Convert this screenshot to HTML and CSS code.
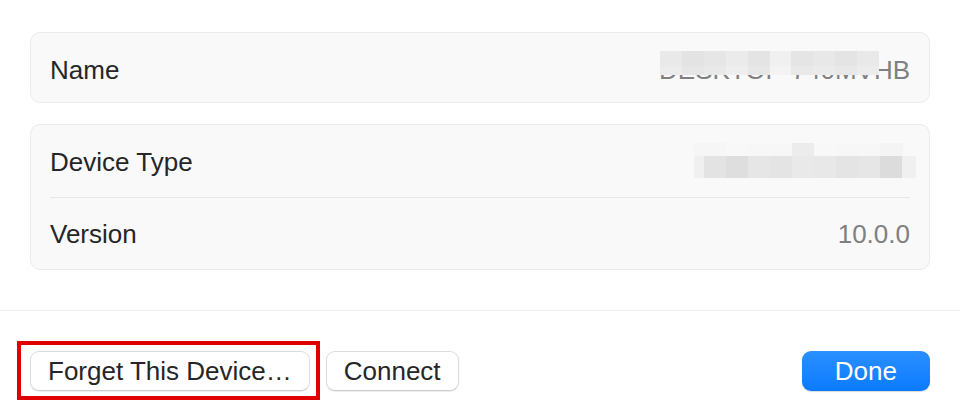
FILE: index.html
```html
<!DOCTYPE html>
<html lang="en">
<head>
<meta charset="utf-8">
<title>Device Info</title>
<link rel="stylesheet" href="styles.css">
</head>
<body>
<div class="sheet">
  <div class="content">
    <div class="card">
      <div class="row row-single">
        <span class="label">Name</span>
        <span class="value masked">DESKTOP-740MVHB<span class="mosaic mosaic-name"></span></span>
      </div>
    </div>
    <div class="card">
      <div class="row row-tall">
        <span class="label">Device Type</span>
        <span class="mosaic mosaic-type"></span>
      </div>
      <div class="sep"></div>
      <div class="row row-tall">
        <span class="label">Version</span>
        <span class="value">10.0.0</span>
      </div>
    </div>
  </div>
  <div class="footer">
    <div class="highlight"><button class="btn">Forget This Device…</button></div>
    <button class="btn">Connect</button>
    <button class="btn btn-primary">Done</button>
  </div>
</div>
</body>
</html>
```

FILE: styles.css
```css
html, body {
  margin: 0;
  padding: 0;
  background: #ffffff;
}

body {
  font-family: "Liberation Sans", Arial, sans-serif;
  font-size: 26px;
  color: #262626;
  width: 960px;
  height: 420px;
  overflow: hidden;
}

.content {
  display: flex;
  flex-direction: column;
  gap: 21px;
  padding: 32px 30px 0 30px;
}

.card {
  background: #f9f9f9;
  border: 1px solid #ebebeb;
  border-radius: 10px;
  padding: 0 19px;
}

.row {
  display: flex;
  justify-content: space-between;
  align-items: center;
  box-sizing: border-box;
  line-height: 30px;
}

.row-single {
  height: 69px;
  padding-top: 4px;
}

.row-tall {
  height: 71.5px;
  padding-top: 2px;
}

.sep {
  height: 1px;
  background: #e7e7e7;
}

.label {
  color: #262626;
}

.value {
  color: #808080;
  position: relative;
}

.mosaic {
  display: block;
}

.mosaic-name {
  position: absolute;
  right: 31px;
  top: -4px;
  width: 219px;
  height: 24px;
  background:
    linear-gradient(to right,
      #e9e9e9 0 10%, #e3e3e3 10% 20%, #e6e6e6 20% 30%, #ebebeb 30% 40%,
      #e4e4e4 40% 50%, #f0f0f0 50% 60%, #e5e5e5 60% 70%, #e8e8e8 70% 80%,
      #e4e4e4 80% 90%, #e9e9e9 90% 100%) top / 100% 15px no-repeat,
    linear-gradient(to right,
      #ececec 0 10%, #e6e6e6 10% 20%, #e9e9e9 20% 30%, #eeeeee 30% 40%,
      #e7e7e7 40% 50%, #f3f3f3 50% 60%, #e9e9e9 60% 70%, #ebebeb 70% 80%,
      #e8e8e8 80% 90%, #ececec 90% 100%) bottom / 100% 9px no-repeat;
}

.mosaic-type {
  width: 222px;
  height: 35px;
  margin-right: -6px;
  margin-bottom: 2.5px;
  background:
    linear-gradient(to right,
      #f6f6f6 0 14%, #f8f8f8 14% 24%, #f7f7f7 24% 44%, #ececec 44% 54%,
      #f8f8f8 54% 64%, #f7f7f7 64% 84%, #f4f4f4 84% 94%, #f9f9f9 94% 100%) top / 100% 13px no-repeat,
    linear-gradient(to right,
      #f0f0f0 0 4.5%, #e3e3e3 4.5% 14.4%, #dedede 14.4% 24.3%, #e6e6e6 24.3% 34.2%,
      #e4e4e4 34.2% 44.1%, #e9e9e9 44.1% 54%, #e8e8e8 54% 63.9%, #e4e4e4 63.9% 73.8%,
      #e6e6e6 73.8% 83.7%, #dcdcdc 83.7% 93.6%, #f0f0f0 93.6% 100%) bottom / 100% 22px no-repeat;
}

.footer {
  display: flex;
  align-items: center;
  gap: 6px;
  margin-top: 40px;
  border-top: 1px solid #efefef;
  padding: 30px 30px 0 17px;
}

.highlight {
  border: 4px solid #e00000;
  padding: 6px 6px 5px 9px;
  display: flex;
}

.btn {
  font-family: "Liberation Sans", Arial, sans-serif;
  font-size: 26px;
  color: #262626;
  height: 40px;
  padding: 0 17px;
  background: #ffffff;
  border: 1px solid #dcdcdc;
  border-bottom-color: #cdcdcd;
  border-radius: 9px;
  box-shadow: 0 1px 1px rgba(0, 0, 0, 0.08);
  line-height: 38px;
  cursor: default;
}

.btn-primary {
  margin-left: auto;
  color: #ffffff;
  border: none;
  padding: 0 33px;
  background: linear-gradient(to bottom, #2b90ff, #0a7bff);
  box-shadow: 0 1px 1px rgba(0, 0, 0, 0.15);
  line-height: 40px;
}
```
